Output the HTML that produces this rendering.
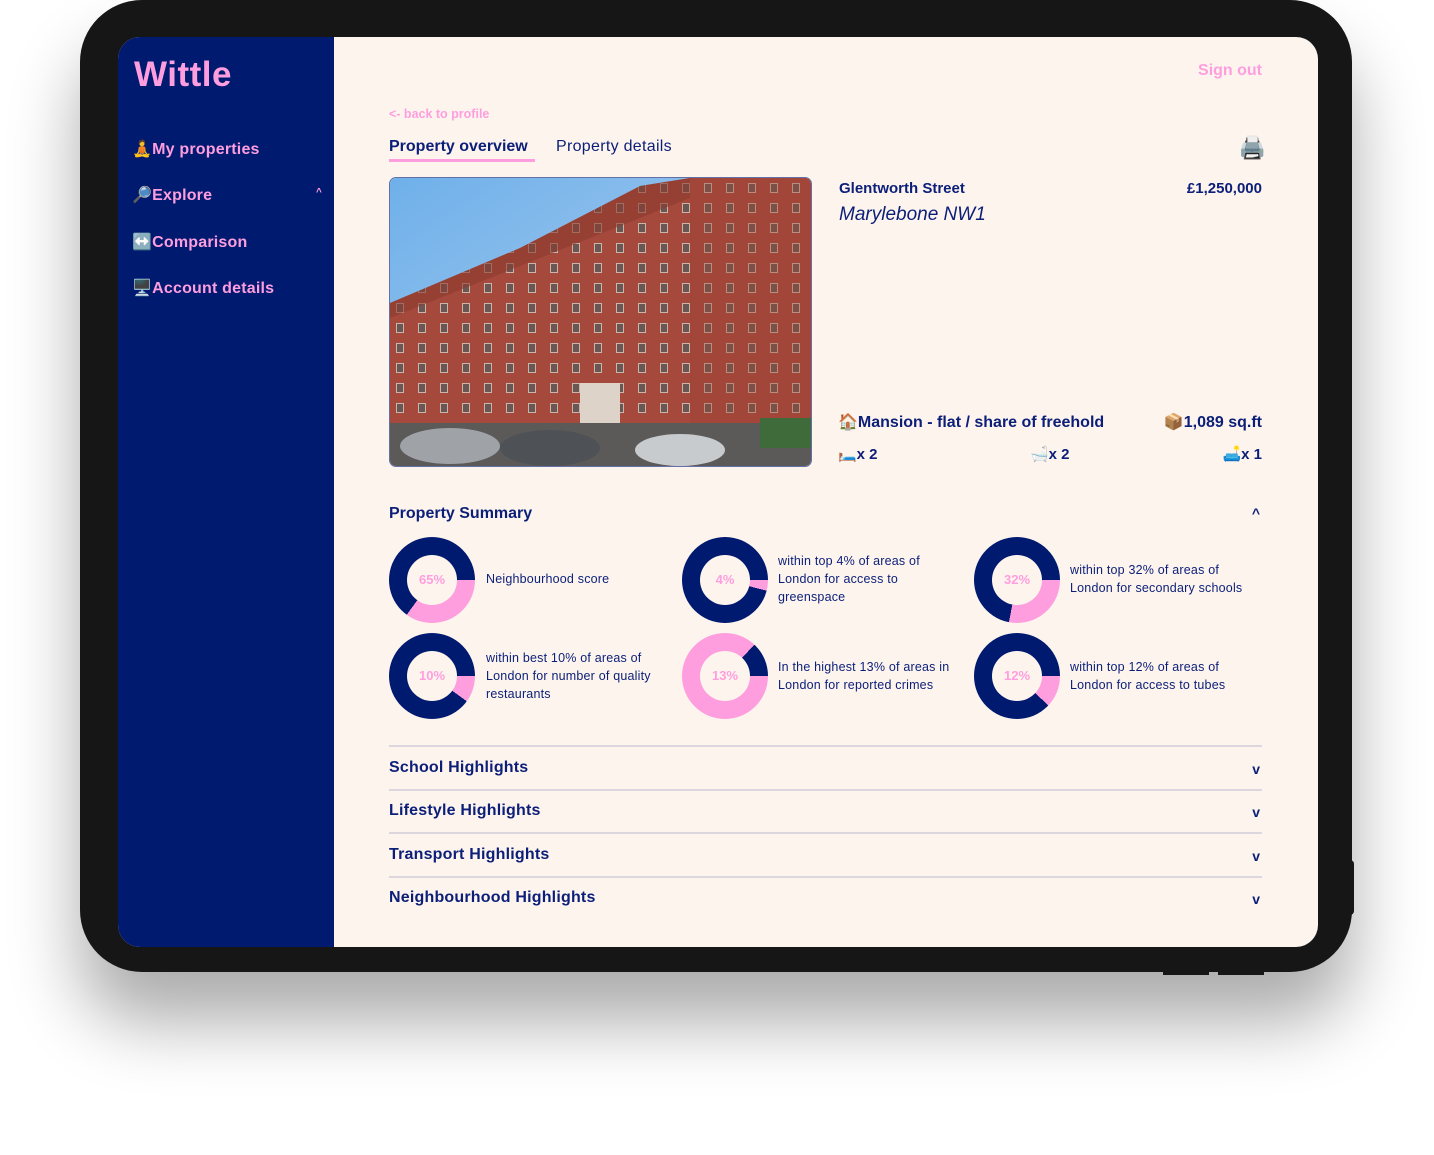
<!DOCTYPE html>
<html><head><meta charset="utf-8"><style>
*{margin:0;padding:0;box-sizing:border-box}
body{width:1434px;height:1155px;background:#fff;position:relative;overflow:hidden;font-family:"Liberation Sans","DejaVu Sans",sans-serif;color:#0b1f78}
.dev{position:absolute;left:80px;top:0;width:1272px;height:972px;background:#161616;border-radius:62px;box-shadow:0 50px 70px rgba(0,0,0,.33)}
.btn{position:absolute;background:#161616}
.screen{position:absolute;left:118px;top:37px;width:1200px;height:910px;border-radius:22px;overflow:hidden;background:#fdf4ee}
.side{position:absolute;left:0;top:0;width:216px;height:910px;background:#001a70}
.a{position:absolute;font-weight:bold;white-space:nowrap}
.r{position:absolute;font-weight:bold;white-space:nowrap;right:56px}
.pk{color:#ff9ede}
.nav{font-size:16px;color:#ff9ede;letter-spacing:.2px}
.donut{position:absolute;width:86px;height:86px;border-radius:50%}
.donut:after{content:"";position:absolute;left:18px;top:18px;width:50px;height:50px;border-radius:50%;background:#fdf4ee}
.donut span{position:absolute;z-index:2;left:0;width:86px;top:35px;text-align:center;font-size:13px;font-weight:bold;color:#ff9ede}
.dt{position:absolute;font-size:12.5px;line-height:18px;color:#0b1f78;letter-spacing:.2px}
.line{position:absolute;left:271px;width:873px;height:2px;background:#dcd6df}
.hl{font-size:16px;letter-spacing:.2px}
.chev{position:absolute;right:58px;font-size:14px;font-weight:bold}
</style></head><body>
<div class="dev"></div>
<div class="btn" style="left:1340px;top:860px;width:14px;height:55px;border-radius:0 4px 4px 0"></div>
<div class="btn" style="left:1163px;top:960px;width:46px;height:15px"></div>
<div class="btn" style="left:1218px;top:960px;width:46px;height:15px"></div>
<div class="screen">
 <div class="side">
  <div class="a pk" style="left:16px;top:18px;font-size:35px;letter-spacing:.5px">Wittle</div>
  <div class="a nav" style="left:14px;top:102px">🧘My properties</div>
  <div class="a nav" style="left:14px;top:148px">🔎Explore</div>
  <div class="a nav" style="left:198px;top:150px;font-size:10px">^</div>
  <div class="a nav" style="left:14px;top:195px">↔️Comparison</div>
  <div class="a nav" style="left:14px;top:241px">🖥️Account details</div>
 </div>
 <div class="r pk" style="top:25px;font-size:16px">Sign out</div>
 <div class="a pk" style="left:271px;top:70px;font-size:12.5px">&lt;- back to profile</div>
 <div class="a" style="left:271px;top:101px;font-size:16px">Property overview</div>
 <div style="position:absolute;left:271px;top:122px;width:146px;height:3px;background:#ff9ede"></div>
 <div class="a" style="left:438px;top:101px;font-size:16px;font-weight:normal;letter-spacing:.3px">Property details</div>
 <div class="r" style="top:98px;font-size:22px;right:52px">🖨️</div>
 <div style="position:absolute;left:271px;top:140px;width:423px;height:290px;border-radius:7px;overflow:hidden;border:1px solid #6470a8">
  <svg width="423" height="290" viewBox="0 0 423 290">
   <defs><linearGradient id="s" x1="0" y1="0" x2="1" y2="1"><stop offset="0" stop-color="#6fb0ea"/><stop offset="1" stop-color="#b9d4ef"/></linearGradient>
   <pattern id="w" width="22" height="20" patternUnits="userSpaceOnUse"><rect width="22" height="20" fill="#a5493c"/><rect x="6" y="5" width="8" height="10" fill="#c9b5aa"/><rect x="7" y="6" width="6" height="8" fill="#6a5652"/></pattern></defs>
   <rect width="423" height="290" fill="url(#s)"/>
   <polygon points="0,125 130,70 250,8 300,0 423,0 423,250 0,260" fill="url(#w)"/>
   <polygon points="0,125 130,70 250,8 300,0 300,20 0,140" fill="#8c3a2f" opacity=".6"/>
   <polygon points="300,0 423,0 423,240 300,250" fill="#9e4233" opacity=".35"/>
   <rect x="190" y="205" width="40" height="60" fill="#ddd3c8"/>
   <rect x="0" y="245" width="423" height="45" fill="#5c5a58"/>
   <ellipse cx="60" cy="268" rx="50" ry="18" fill="#9fa3a8"/>
   <ellipse cx="160" cy="270" rx="50" ry="18" fill="#4e5256"/>
   <ellipse cx="290" cy="272" rx="45" ry="16" fill="#c8cbce"/>
   <rect x="370" y="240" width="53" height="30" fill="#3f6b3a"/>
  </svg>
 </div>
 <div class="a" style="left:721px;top:143px;font-size:15px">Glentworth Street</div>
 <div class="r" style="top:143px;font-size:15px">£1,250,000</div>
 <div class="a" style="left:721px;top:167px;font-size:19px;font-weight:normal;font-style:italic">Marylebone NW1</div>
 <div class="a" style="left:720px;top:375px;font-size:16px">🏠Mansion - flat / share of freehold</div>
 <div class="r" style="top:375px;font-size:16px">📦1,089 sq.ft</div>
 <div class="a" style="left:720px;top:408px;font-size:15px">🛏️x 2</div>
 <div class="a" style="left:912px;top:408px;font-size:15px">🛁x 2</div>
 <div class="r" style="top:408px;font-size:15px">🛋️x 1</div>
 <div class="a" style="left:271px;top:468px;font-size:16px">Property Summary</div>
 <div class="chev" style="top:468px">^</div>

 <div class="donut" style="left:271px;top:500px;background:conic-gradient(from 90deg,#ff9ede 0 35%,#001a70 35% 100%)"><span>65%</span></div>
 <div class="dt" style="left:368px;top:533px">Neighbourhood score</div>
 <div class="donut" style="left:564px;top:500px;background:conic-gradient(from 90deg,#ff9ede 0 4%,#001a70 4% 100%)"><span>4%</span></div>
 <div class="dt" style="left:660px;top:515px">within top 4% of areas of<br>London for access to<br>greenspace</div>
 <div class="donut" style="left:856px;top:500px;background:conic-gradient(from 90deg,#ff9ede 0 28%,#001a70 28% 100%)"><span>32%</span></div>
 <div class="dt" style="left:952px;top:524px">within top 32% of areas of<br>London for secondary schools</div>

 <div class="donut" style="left:271px;top:596px;background:conic-gradient(from 90deg,#ff9ede 0 10%,#001a70 10% 100%)"><span>10%</span></div>
 <div class="dt" style="left:368px;top:612px">within best 10% of areas of<br>London for number of quality<br>restaurants</div>
 <div class="donut" style="left:564px;top:596px;background:conic-gradient(from 90deg,#ff9ede 0 87%,#001a70 87% 100%)"><span>13%</span></div>
 <div class="dt" style="left:660px;top:621px">In the highest 13% of areas in<br>London for reported crimes</div>
 <div class="donut" style="left:856px;top:596px;background:conic-gradient(from 90deg,#ff9ede 0 12%,#001a70 12% 100%)"><span>12%</span></div>
 <div class="dt" style="left:952px;top:621px">within top 12% of areas of<br>London for access to tubes</div>

 <div class="line" style="top:708px"></div>
 <div class="a hl" style="left:271px;top:722px">School Highlights</div><div class="chev" style="top:724px">v</div>
 <div class="line" style="top:752px"></div>
 <div class="a hl" style="left:271px;top:765px">Lifestyle Highlights</div><div class="chev" style="top:767px">v</div>
 <div class="line" style="top:795px"></div>
 <div class="a hl" style="left:271px;top:809px">Transport Highlights</div><div class="chev" style="top:811px">v</div>
 <div class="line" style="top:839px"></div>
 <div class="a hl" style="left:271px;top:852px">Neighbourhood Highlights</div><div class="chev" style="top:854px">v</div>
</div>
</body></html>
